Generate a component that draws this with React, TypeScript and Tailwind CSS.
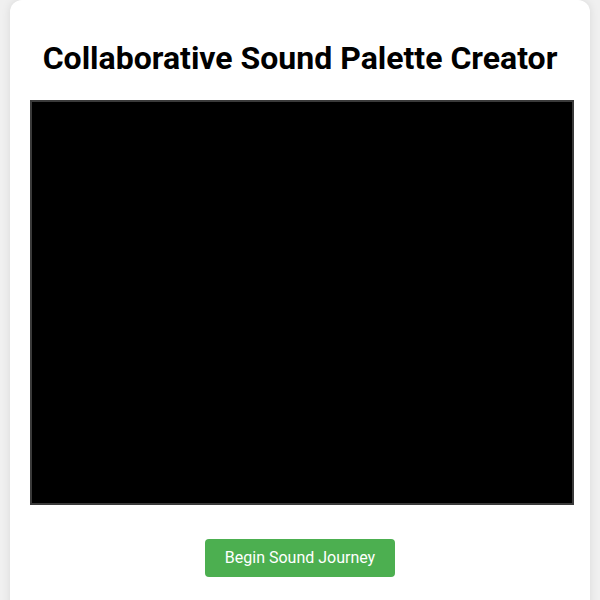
export default function App() {
  return (
    <div className="min-h-screen bg-[#f0f0f0] px-[10px] font-['Roboto',sans-serif]">
      <div className="rounded-[12px] bg-white px-[20px] pt-[20px] pb-[40px] shadow-[0_0_10px_rgba(0,0,0,0.1)]">
        <h1 className="mt-[20px] mb-[22px] text-center text-[32px] font-bold leading-[37.5px] text-black">
          Collaborative Sound Palette Creator
        </h1>
        <div className="h-[405px] w-[544px] border-2 border-[#3a3a3a] bg-black" />
        <div className="mt-[34px] flex justify-center">
          <button
            type="button"
            className="rounded-[4px] bg-[#4CAF50] px-[20px] py-[10px] text-[16px] leading-[18.75px] text-white"
          >
            Begin Sound Journey
          </button>
        </div>
      </div>
    </div>
  );
}
